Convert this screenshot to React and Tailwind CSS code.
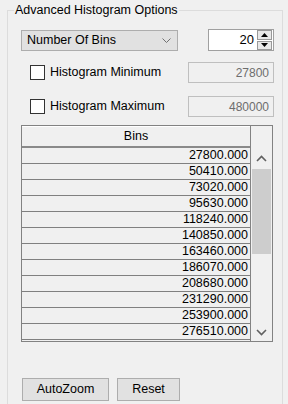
import React from 'react';

const bins = [
	'27800.000',
	'50410.000',
	'73020.000',
	'95630.000',
	'118240.000',
	'140850.000',
	'163460.000',
	'186070.000',
	'208680.000',
	'231290.000',
	'253900.000',
	'276510.000',
];

const Chevron = ({ up, className }) => (
	<svg width="11" height="7" viewBox="0 0 11 7" className={className}>
		<polyline
			points={up ? '1,6 5.5,1.5 10,6' : '1,1 5.5,5.5 10,1'}
			fill="none"
			stroke="#606060"
			strokeWidth="1.6"
		/>
	</svg>
);

const Checkbox = () => <div className="w-[15px] h-[15px] border border-[#333] bg-white shrink-0" />;

const App = () => {
	return (
		<div
			className="w-[288px] h-[404px] bg-[#f0f0f0] overflow-hidden pt-[10px] pl-[7px] text-[12.5px] text-black"
			style={{ fontFamily: '"Liberation Sans", Arial, sans-serif' }}
		>
			<div className="relative w-[276px] h-[420px] border border-[#dcdcdc] pt-[19px] pl-[13px]">
				<span className="absolute left-[6px] -top-[9px] bg-[#f0f0f0] px-px leading-[16px]">
					Advanced Histogram Options
				</span>

				{/* bins mode + count */}
				<div className="flex items-start">
					<div className="w-[157px] h-[21px] bg-[#e1e1e1] border border-[#adadad] flex items-center justify-between pl-[5px] pr-[6px]">
						<span>Number Of Bins</span>
						<svg width="9" height="5" viewBox="0 0 9 5">
							<polyline points="0.5,0.5 4.5,4.5 8.5,0.5" fill="none" stroke="#707070" strokeWidth="1" />
						</svg>
					</div>
					<div className="ml-[30px] -mt-px w-[66px] h-[22px] bg-white border border-[#a0a0a0] flex items-center">
						<span className="flex-1 text-right pr-[3px] text-[13px]">20</span>
						<div className="flex flex-col w-[16px] h-[20px] gap-px pr-px">
							<div className="flex-1 bg-[#e8e8e8] border border-[#999] flex items-center justify-center">
								<svg width="7" height="4" viewBox="0 0 7 4">
									<polygon points="0,4 3.5,0 7,4" fill="#000" />
								</svg>
							</div>
							<div className="flex-1 bg-[#e8e8e8] border border-[#999] flex items-center justify-center">
								<svg width="7" height="4" viewBox="0 0 7 4">
									<polygon points="0,0 3.5,4 7,0" fill="#000" />
								</svg>
							</div>
						</div>
					</div>
				</div>

				{/* min / max */}
				<div className="mt-[11px] flex items-center h-[21px]">
					<div className="ml-[9px] flex items-center gap-[5px] w-[158px]">
						<Checkbox />
						<span>Histogram Minimum</span>
					</div>
					<div className="w-[86px] h-[21px] border border-[#bfbfbf] flex items-center justify-end pr-[4px] text-[#6d6d6d] text-[12px]">
						27800
					</div>
				</div>
				<div className="mt-[13px] flex items-center h-[21px]">
					<div className="ml-[9px] flex items-center gap-[5px] w-[158px]">
						<Checkbox />
						<span>Histogram Maximum</span>
					</div>
					<div className="w-[86px] h-[21px] border border-[#bfbfbf] flex items-center justify-end pr-[4px] text-[#6d6d6d] text-[12px]">
						480000
					</div>
				</div>

				{/* bins table */}
				<div className="mt-[8px] w-[252px] h-[217px] border border-[#828282] flex">
					<div className="w-[229px] border-r border-[#828282]">
						<div className="h-[22px] border-b-2 border-[#8a8a8a] border-t border-t-white flex items-center justify-center">
							Bins
						</div>
						{bins.map((b) => (
							<div key={b} className="h-[16px] border-b border-[#808080] flex items-center justify-end pr-[2px] leading-none">
								{b}
							</div>
						))}
					</div>
					<div className="flex-1 flex flex-col">
						<div className="h-[22px]" />
						<div className="h-[21px] flex items-center justify-center">
							<Chevron up />
						</div>
						<div className="flex-1 pl-px pr-px">
							<div className="h-[85px] bg-[#cdcdcd]" />
						</div>
						<div className="h-[17px] flex items-center justify-center">
							<Chevron />
						</div>
					</div>
				</div>

				{/* buttons */}
				<div className="mt-[36px] ml-px flex gap-[8px]">
					<button className="w-[87px] h-[23px] bg-[#e1e1e1] border border-[#adadad]">AutoZoom</button>
					<button className="w-[63px] h-[23px] bg-[#e1e1e1] border border-[#adadad]">Reset</button>
				</div>
			</div>
		</div>
	);
};

export default App;
